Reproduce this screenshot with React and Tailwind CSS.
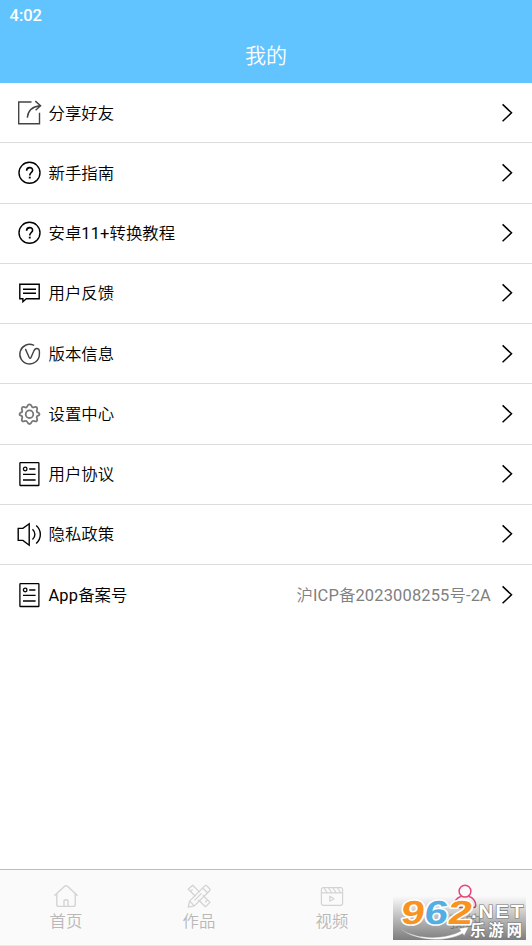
const stroke = { fill: 'none', stroke: 'currentColor' };

function ShareIcon() {
  return (
    <svg width="26" height="26" viewBox="0 0 26 26" className="text-[#444]" {...stroke} strokeWidth="1.4">
      <path d="M15.5 2H2.7v21.8h20.8V12.7" />
      <path d="M11.3 17.7C12 10.5 16 6.5 24 5.7M19.3 1.1l5.3 4.6-5 4.6" />
    </svg>
  );
}

function HelpIcon() {
  return (
    <svg width="26" height="26" viewBox="0 0 26 26" className="text-black" {...stroke} strokeWidth="1.4">
      <circle cx="13.5" cy="12.8" r="10.5" />
      <path d="M10.6 10.8c0-4.2 6-4.2 6-.5 0 2.2-2.9 2.3-2.9 5.1" strokeWidth="1.6" />
      <path d="M12.8 17.6h1.9" strokeWidth="1.8" />
    </svg>
  );
}

function FeedbackIcon() {
  return (
    <svg width="26" height="26" viewBox="0 0 26 26" className="text-black" {...stroke} strokeWidth="1.4">
      <path d="M3.8 4.2h19.4v14.6H10.3l-3.4 2.9v-2.9H3.8z" />
      <path d="M7 9.2h13M7 13.2h13" />
    </svg>
  );
}

function VersionIcon() {
  return (
    <svg width="26" height="26" viewBox="0 0 26 26" className="text-[#444]" {...stroke} strokeWidth="1.4" strokeLinecap="round" strokeLinejoin="round">
      <path d="M17.6 4.2A9.8 9.8 0 1 0 23.4 13.5V10.6c0-2-1-3.1-2.7-3.1-1.7 0-2.4 1.2-3.1 3l-2.7 6.2c-.4.9-1.2.9-1.6 0L9.6 8.4" />
    </svg>
  );
}

function GearIcon() {
  return (
    <svg width="26" height="26" viewBox="0 0 26 26" className="text-[#777]" {...stroke} strokeWidth="1.8" strokeLinejoin="round">
      <path d="M13.5 3.3c2.3 0 1.6 2.4 3.1 3s2.8-1.3 4.2.1-.6 2.8 0 4.3 2.7.5 2.7 2.5-2.1 1-2.7 2.5 1.4 2.9 0 4.3-2.7-.6-4.2 0-.8 3-3.1 3-1.6-2.4-3.1-3-2.8 1.4-4.2 0 .6-2.8 0-4.3-2.7-.5-2.7-2.5 2.1-1 2.7-2.5-1.4-2.9 0-4.3 2.7.6 4.2 0 .8-3.1 3.1-3.1z" />
      <circle cx="13.5" cy="13.2" r="3.8" />
    </svg>
  );
}

function DocIcon() {
  return (
    <svg width="26" height="26" viewBox="0 0 26 26" className="text-black" {...stroke} strokeWidth="1.3">
      <rect x="3.9" y="1.7" width="19" height="22.8" rx=".6" />
      <circle cx="9.2" cy="8" r="1.8" />
      <path d="M13.2 8h6.2M7 13.4h12.6M7 19h12.6" />
    </svg>
  );
}

function SpeakerIcon() {
  return (
    <svg width="26" height="26" viewBox="0 0 26 26" className="text-black" {...stroke} strokeWidth="1.4">
      <path d="M2.2 7.4h4.7l6.3-4.6v21.4l-6.3-4.8H2.2z" />
      <path d="M16.5 8.2c3.2 3 3.2 7.3 0 10.4M20.2 4.6c5.5 5 5.5 12.6 0 17.8" />
    </svg>
  );
}

function Chevron() {
  return (
    <svg width="14" height="20" viewBox="0 0 14 20" className="block text-black" {...stroke} strokeWidth="1.5">
      <path d="M2.6 1.4l8.9 8.4-8.9 8.4" />
    </svg>
  );
}

function HomeIcon() {
  return (
    <svg width="26" height="26" viewBox="0 0 26 26" {...stroke} strokeWidth="1.4" strokeLinejoin="round" strokeLinecap="round">
      <path d="M1.8 12.2L11.6 3.3q1.4-1 2.8 0l9.8 8.9M3.8 10.8v10.6q0 2 2 2h14.4q2 0 2-2V10.8" />
      <path d="M11 23v-4.6q0-1.6 2-1.6t2 1.6V23" />
    </svg>
  );
}

function WorksIcon() {
  return (
    <svg width="26" height="26" viewBox="0 0 26 26" {...stroke} strokeWidth="1.3" strokeLinejoin="round">
      <path d="M9.5 13.3L2.2 6.3l4.4-4 7.1 6.8M16.8 12.2l7.2 7.2-4.6 4.4-7-7" />
      <path d="M2.2 24.2l1.4-6.1L18.8 2.9q1-1 2 0l2.8 2.8q1 1 0 2L8.4 22.9zM3.6 18.1l4.8 4.8M16.7 5l4.8 4.8M8.5 17.4l7-7" />
      <path d="M4.6 8.4l2-2M19.2 19.3l2-2" />
    </svg>
  );
}

function VideoIcon() {
  return (
    <svg width="26" height="26" viewBox="0 0 26 26" {...stroke} strokeWidth="1.2" strokeLinejoin="round">
      <rect x="2.4" y="4.7" width="21.2" height="17.6" rx="2" />
      <path d="M2.4 9.9h21.2M5 5l3 4.5M9.5 5l3 4.5M14 5l3 4.5M18.5 5l3 4.5M10.8 13.2v5l4.2-2.5z" />
    </svg>
  );
}

function MineIcon() {
  return (
    <svg width="26" height="26" viewBox="0 0 26 26" className="text-[#e5487a]" {...stroke} strokeWidth="1.5">
      <circle cx="13" cy="8.2" r="5.9" />
      <path d="M9.5 13.3C5 14.8 2.3 18.2 2.3 22.6q0 1.8 1.8 1.8h17.8q1.8 0 1.8-1.8c0-4.4-2.7-7.8-7.2-9.3" />
    </svg>
  );
}

const rows = [
  { label: '分享好友', icon: ShareIcon },
  { label: '新手指南', icon: HelpIcon },
  { label: '安卓11+转换教程', icon: HelpIcon },
  { label: '用户反馈', icon: FeedbackIcon },
  { label: '版本信息', icon: VersionIcon },
  { label: '设置中心', icon: GearIcon },
  { label: '用户协议', icon: DocIcon },
  { label: '隐私政策', icon: SpeakerIcon },
  { label: 'App备案号', icon: DocIcon, value: '沪ICP备2023008255号-2A' },
];

const tabs = [
  { label: '首页', icon: HomeIcon },
  { label: '作品', icon: WorksIcon },
  { label: '视频', icon: VideoIcon },
  { label: '我的', icon: MineIcon },
];

// Latin runs keep the regular weight, Chinese runs are set a little lighter
function MixedText({ text }) {
  return text.split(/([\w+-]+)/).map((part, i) =>
    i % 2 ? <span key={i} className="font-normal tracking-[0.17px]">{part}</span> : part
  );
}

function Watermark() {
  return (
    <div className="absolute left-[393px] top-[26px] h-[44px] w-[133px] bg-linear-to-b from-black/0 to-black/50">
      <svg width="139" height="48" viewBox="0 0 139 48" className="absolute left-0 top-px">
        <path d="M7 31c14 12 45 12 61 3l-2-2.4 9.5-1.6-4.3 8.6-1.7-2.2C52 46 20 44 7 31z" fill="#fff" stroke="#999" strokeWidth=".4" />
        <g transform="translate(7 27) skewX(-7)" fontFamily="'Liberation Sans', Arial, sans-serif" fontSize="33.5" fontWeight="bold" stroke="#fff" strokeWidth="3" paintOrder="stroke" strokeLinejoin="round">
          <text x="0" y="0" textLength="23.5" lengthAdjust="spacingAndGlyphs" fill="#f7931e">9</text>
          <text x="23.5" y="0" textLength="23.5" lengthAdjust="spacingAndGlyphs" fill="#55aee3">6</text>
          <text x="47" y="0" textLength="24.5" lengthAdjust="spacingAndGlyphs" fill="#f7931e">2</text>
        </g>
        <text x="78" y="21" fontFamily="'Liberation Sans', Arial, sans-serif" fontSize="18.5" fontWeight="bold" textLength="54" lengthAdjust="spacingAndGlyphs" letterSpacing="1.6" fill="#fff" stroke="#777" strokeWidth="1.2" paintOrder="stroke">.NET</text>
        <text x="77" y="38.5" fontSize="15.5" fontWeight="bold" textLength="52" fontFamily="'Noto Sans CJK SC', sans-serif" fill="#fff" stroke="#777" strokeWidth="1.2" paintOrder="stroke">乐游网</text>
      </svg>
    </div>
  );
}

export default function App() {
  return (
    <div className="flex h-[946px] w-[532px] flex-col overflow-hidden bg-white font-[Roboto,'Noto_Sans_CJK_SC',sans-serif]">
      <header className="flex h-[83px] flex-col bg-[#62c4ff] text-white">
        <div className="h-[30px] pl-[9.5px] pt-px text-[16.5px] font-medium leading-[30px]">4:02</div>
        <h1 className="text-center text-[21px] font-[350] leading-[52px]">我的</h1>
      </header>

      <main className="flex-1">
        {rows.map(({ label, icon: Icon, value }, i) => (
          <div
            key={label}
            className={`flex h-[60.25px] items-center pl-4 pr-[18px] ${i < rows.length - 1 ? 'border-b border-[#dcdcdc]' : ''}`}
          >
            <Icon />
            <span className="ml-[6.5px] pt-[2px] text-[16.4px] font-[350] leading-6 text-black">
              <MixedText text={label} />
            </span>
            {value && (
              <span className="ml-auto pt-[2px] text-[16.45px] font-[350] leading-6 text-[#808080]">
                <MixedText text={value} />
              </span>
            )}
            <span className={value ? 'ml-[9px]' : 'ml-auto'}>
              <Chevron />
            </span>
          </div>
        ))}
      </main>

      <nav className="relative grid h-[77px] grid-cols-4 border-b border-t border-b-[#e8e8e8] border-t-[#bdbdbd] bg-[#fafafa]">
        {tabs.map(({ label, icon: Icon }) => (
          <div key={label} className="flex flex-col items-center pr-px pt-[13px] text-[#d3d3d3]">
            <Icon />
            <span className="pt-px text-[16.4px] font-[350] leading-6 text-[#b8b8b8]">{label}</span>
          </div>
        ))}
        <Watermark />
      </nav>
    </div>
  );
}
